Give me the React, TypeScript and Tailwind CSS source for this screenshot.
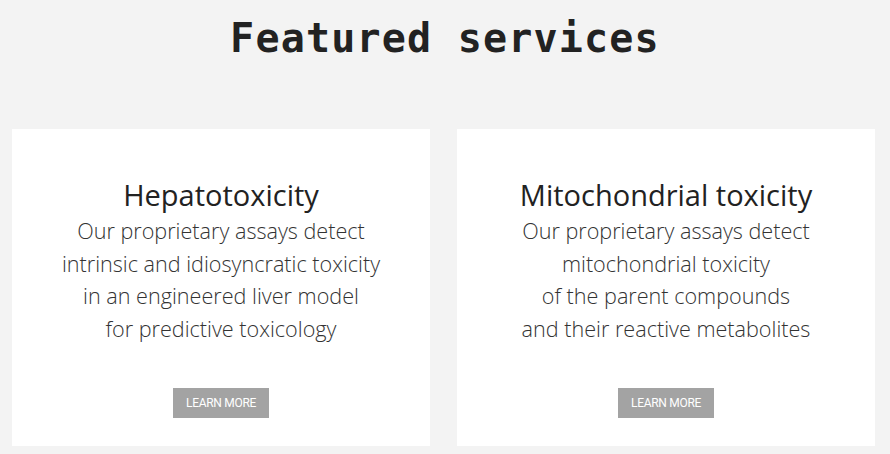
import React from "react";

const services = [
  {
    title: "Hepatotoxicity",
    lines: [
      "Our proprietary assays detect",
      "intrinsic and idiosyncratic toxicity",
      "in an engineered liver model",
      "for predictive toxicology"
    ]
  },
  {
    title: "Mitochondrial toxicity",
    lines: [
      "Our proprietary assays detect",
      "mitochondrial toxicity",
      "of the parent compounds",
      "and their reactive metabolites"
    ]
  }
];

export default function App() {
  return (
    <div className="h-[454px] w-[890px] overflow-hidden bg-[#f3f3f3]">
      <h1 className="pt-[13px] text-center font-['DejaVu_Sans_Mono',monospace] text-[40px] font-bold leading-[50px] tracking-[1.2px] text-[#222]">
        Featured services
      </h1>
      <div className="mt-[66px] flex gap-[27px] pl-[12px] pr-[15px]">
        {services.map((service) => (
          <ServiceCard key={service.title} title={service.title} lines={service.lines} />
        ))}
      </div>
    </div>
  );
}

function ServiceCard({ title, lines }: Readonly<{ title: string; lines: string[] }>) {
  return (
    <div className="flex h-[317px] flex-1 flex-col items-center bg-white pt-[46px] font-['Open_Sans',sans-serif]">
      <h2 className="text-[29px] leading-[40px] text-[#222]">{title}</h2>
      <div className="text-center text-[21.6px] font-light leading-[32.5px] text-[#333]">
        {lines.map((line) => (
          <p key={line}>{line}</p>
        ))}
      </div>
      <button className="mt-[43px] h-[30px] w-[96px] bg-[#a3a3a3] font-['Roboto',sans-serif] text-[12px] tracking-[-0.3px] text-white">
        LEARN MORE
      </button>
    </div>
  );
}
